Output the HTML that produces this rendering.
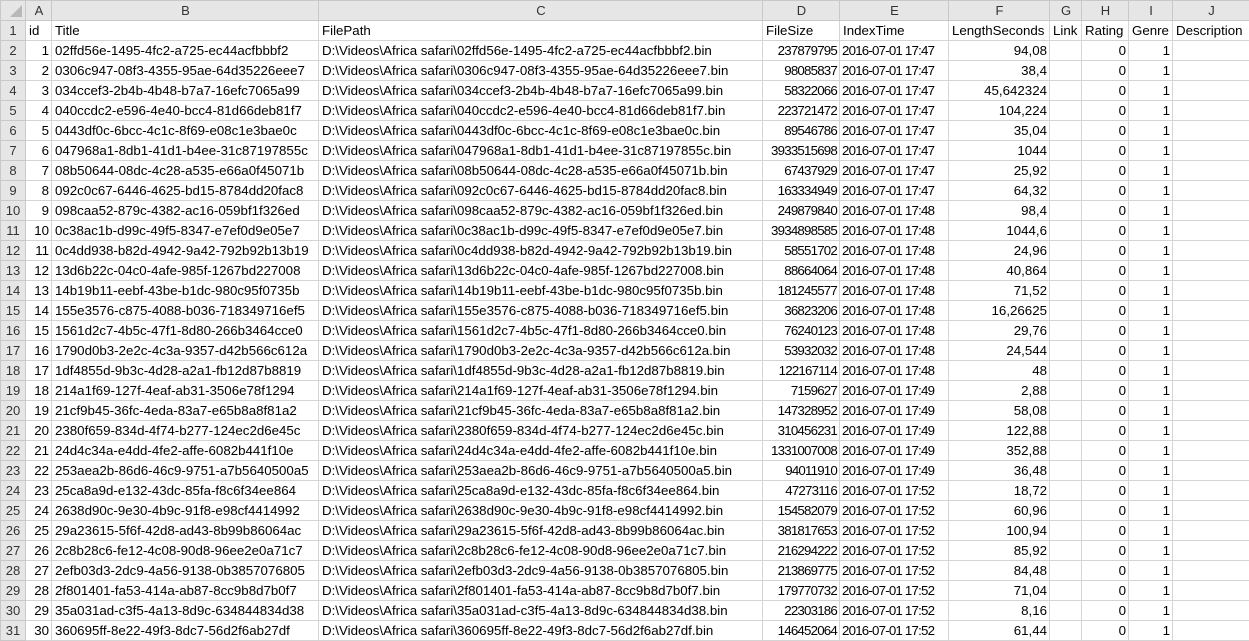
<!DOCTYPE html><html><head><meta charset="utf-8"><style>
body{margin:0;background:#fff;width:1249px;height:640px;overflow:hidden}
table{border-collapse:collapse;table-layout:fixed;width:1249px;font-family:"Liberation Sans",Arial,sans-serif;font-size:13.3px;color:#000}
td{height:19px;border:1px solid #d4d4d4;padding:0 2px 0 3px;white-space:nowrap;overflow:hidden;line-height:19px}
tr.h td{background:#e6e6e6;color:#333;text-align:center;border-color:#c8c8c8;font-size:13px}
td.r{background:#e6e6e6;color:#333;text-align:center;border-color:#c8c8c8;padding:0;font-size:13px}
td.n{text-align:right}
td:nth-child(5),td:nth-child(6){letter-spacing:-0.8px;padding:0 2px}
tr.h td:nth-child(5),tr.h td:nth-child(6),tr.t td:nth-child(5),tr.t td:nth-child(6){letter-spacing:0;padding:0 2px 0 3px}
tr.h td.c{position:relative}
</style></head><body>
<table>
<colgroup><col style="width:25px"><col style="width:26px"><col style="width:267px"><col style="width:444px"><col style="width:77px"><col style="width:109px"><col style="width:101px"><col style="width:32px"><col style="width:47px"><col style="width:44px"><col style="width:77px"></colgroup>
<tr class="h"><td class="c"><svg width="12" height="12" style="position:absolute;right:3px;bottom:3px"><polygon points="12,0 12,12 0,12" fill="#b8b8b8"/></svg></td><td>A</td><td>B</td><td>C</td><td>D</td><td>E</td><td>F</td><td>G</td><td>H</td><td>I</td><td>J</td></tr>
<tr class="t"><td class="r">1</td><td>id</td><td>Title</td><td>FilePath</td><td>FileSize</td><td>IndexTime</td><td>LengthSeconds</td><td>Link</td><td>Rating</td><td>Genre</td><td>Description</td></tr>
<tr><td class="r">2</td><td class="n">1</td><td>02ffd56e-1495-4fc2-a725-ec44acfbbbf2</td><td>D:\Videos\Africa safari\02ffd56e-1495-4fc2-a725-ec44acfbbbf2.bin</td><td class="n">237879795</td><td>2016-07-01 17:47</td><td class="n">94,08</td><td></td><td class="n">0</td><td class="n">1</td><td></td></tr>
<tr><td class="r">3</td><td class="n">2</td><td>0306c947-08f3-4355-95ae-64d35226eee7</td><td>D:\Videos\Africa safari\0306c947-08f3-4355-95ae-64d35226eee7.bin</td><td class="n">98085837</td><td>2016-07-01 17:47</td><td class="n">38,4</td><td></td><td class="n">0</td><td class="n">1</td><td></td></tr>
<tr><td class="r">4</td><td class="n">3</td><td>034ccef3-2b4b-4b48-b7a7-16efc7065a99</td><td>D:\Videos\Africa safari\034ccef3-2b4b-4b48-b7a7-16efc7065a99.bin</td><td class="n">58322066</td><td>2016-07-01 17:47</td><td class="n">45,642324</td><td></td><td class="n">0</td><td class="n">1</td><td></td></tr>
<tr><td class="r">5</td><td class="n">4</td><td>040ccdc2-e596-4e40-bcc4-81d66deb81f7</td><td>D:\Videos\Africa safari\040ccdc2-e596-4e40-bcc4-81d66deb81f7.bin</td><td class="n">223721472</td><td>2016-07-01 17:47</td><td class="n">104,224</td><td></td><td class="n">0</td><td class="n">1</td><td></td></tr>
<tr><td class="r">6</td><td class="n">5</td><td>0443df0c-6bcc-4c1c-8f69-e08c1e3bae0c</td><td>D:\Videos\Africa safari\0443df0c-6bcc-4c1c-8f69-e08c1e3bae0c.bin</td><td class="n">89546786</td><td>2016-07-01 17:47</td><td class="n">35,04</td><td></td><td class="n">0</td><td class="n">1</td><td></td></tr>
<tr><td class="r">7</td><td class="n">6</td><td>047968a1-8db1-41d1-b4ee-31c87197855c</td><td>D:\Videos\Africa safari\047968a1-8db1-41d1-b4ee-31c87197855c.bin</td><td class="n">3933515698</td><td>2016-07-01 17:47</td><td class="n">1044</td><td></td><td class="n">0</td><td class="n">1</td><td></td></tr>
<tr><td class="r">8</td><td class="n">7</td><td>08b50644-08dc-4c28-a535-e66a0f45071b</td><td>D:\Videos\Africa safari\08b50644-08dc-4c28-a535-e66a0f45071b.bin</td><td class="n">67437929</td><td>2016-07-01 17:47</td><td class="n">25,92</td><td></td><td class="n">0</td><td class="n">1</td><td></td></tr>
<tr><td class="r">9</td><td class="n">8</td><td>092c0c67-6446-4625-bd15-8784dd20fac8</td><td>D:\Videos\Africa safari\092c0c67-6446-4625-bd15-8784dd20fac8.bin</td><td class="n">163334949</td><td>2016-07-01 17:47</td><td class="n">64,32</td><td></td><td class="n">0</td><td class="n">1</td><td></td></tr>
<tr><td class="r">10</td><td class="n">9</td><td>098caa52-879c-4382-ac16-059bf1f326ed</td><td>D:\Videos\Africa safari\098caa52-879c-4382-ac16-059bf1f326ed.bin</td><td class="n">249879840</td><td>2016-07-01 17:48</td><td class="n">98,4</td><td></td><td class="n">0</td><td class="n">1</td><td></td></tr>
<tr><td class="r">11</td><td class="n">10</td><td>0c38ac1b-d99c-49f5-8347-e7ef0d9e05e7</td><td>D:\Videos\Africa safari\0c38ac1b-d99c-49f5-8347-e7ef0d9e05e7.bin</td><td class="n">3934898585</td><td>2016-07-01 17:48</td><td class="n">1044,6</td><td></td><td class="n">0</td><td class="n">1</td><td></td></tr>
<tr><td class="r">12</td><td class="n">11</td><td>0c4dd938-b82d-4942-9a42-792b92b13b19</td><td>D:\Videos\Africa safari\0c4dd938-b82d-4942-9a42-792b92b13b19.bin</td><td class="n">58551702</td><td>2016-07-01 17:48</td><td class="n">24,96</td><td></td><td class="n">0</td><td class="n">1</td><td></td></tr>
<tr><td class="r">13</td><td class="n">12</td><td>13d6b22c-04c0-4afe-985f-1267bd227008</td><td>D:\Videos\Africa safari\13d6b22c-04c0-4afe-985f-1267bd227008.bin</td><td class="n">88664064</td><td>2016-07-01 17:48</td><td class="n">40,864</td><td></td><td class="n">0</td><td class="n">1</td><td></td></tr>
<tr><td class="r">14</td><td class="n">13</td><td>14b19b11-eebf-43be-b1dc-980c95f0735b</td><td>D:\Videos\Africa safari\14b19b11-eebf-43be-b1dc-980c95f0735b.bin</td><td class="n">181245577</td><td>2016-07-01 17:48</td><td class="n">71,52</td><td></td><td class="n">0</td><td class="n">1</td><td></td></tr>
<tr><td class="r">15</td><td class="n">14</td><td>155e3576-c875-4088-b036-718349716ef5</td><td>D:\Videos\Africa safari\155e3576-c875-4088-b036-718349716ef5.bin</td><td class="n">36823206</td><td>2016-07-01 17:48</td><td class="n">16,26625</td><td></td><td class="n">0</td><td class="n">1</td><td></td></tr>
<tr><td class="r">16</td><td class="n">15</td><td>1561d2c7-4b5c-47f1-8d80-266b3464cce0</td><td>D:\Videos\Africa safari\1561d2c7-4b5c-47f1-8d80-266b3464cce0.bin</td><td class="n">76240123</td><td>2016-07-01 17:48</td><td class="n">29,76</td><td></td><td class="n">0</td><td class="n">1</td><td></td></tr>
<tr><td class="r">17</td><td class="n">16</td><td>1790d0b3-2e2c-4c3a-9357-d42b566c612a</td><td>D:\Videos\Africa safari\1790d0b3-2e2c-4c3a-9357-d42b566c612a.bin</td><td class="n">53932032</td><td>2016-07-01 17:48</td><td class="n">24,544</td><td></td><td class="n">0</td><td class="n">1</td><td></td></tr>
<tr><td class="r">18</td><td class="n">17</td><td>1df4855d-9b3c-4d28-a2a1-fb12d87b8819</td><td>D:\Videos\Africa safari\1df4855d-9b3c-4d28-a2a1-fb12d87b8819.bin</td><td class="n">122167114</td><td>2016-07-01 17:48</td><td class="n">48</td><td></td><td class="n">0</td><td class="n">1</td><td></td></tr>
<tr><td class="r">19</td><td class="n">18</td><td>214a1f69-127f-4eaf-ab31-3506e78f1294</td><td>D:\Videos\Africa safari\214a1f69-127f-4eaf-ab31-3506e78f1294.bin</td><td class="n">7159627</td><td>2016-07-01 17:49</td><td class="n">2,88</td><td></td><td class="n">0</td><td class="n">1</td><td></td></tr>
<tr><td class="r">20</td><td class="n">19</td><td>21cf9b45-36fc-4eda-83a7-e65b8a8f81a2</td><td>D:\Videos\Africa safari\21cf9b45-36fc-4eda-83a7-e65b8a8f81a2.bin</td><td class="n">147328952</td><td>2016-07-01 17:49</td><td class="n">58,08</td><td></td><td class="n">0</td><td class="n">1</td><td></td></tr>
<tr><td class="r">21</td><td class="n">20</td><td>2380f659-834d-4f74-b277-124ec2d6e45c</td><td>D:\Videos\Africa safari\2380f659-834d-4f74-b277-124ec2d6e45c.bin</td><td class="n">310456231</td><td>2016-07-01 17:49</td><td class="n">122,88</td><td></td><td class="n">0</td><td class="n">1</td><td></td></tr>
<tr><td class="r">22</td><td class="n">21</td><td>24d4c34a-e4dd-4fe2-affe-6082b441f10e</td><td>D:\Videos\Africa safari\24d4c34a-e4dd-4fe2-affe-6082b441f10e.bin</td><td class="n">1331007008</td><td>2016-07-01 17:49</td><td class="n">352,88</td><td></td><td class="n">0</td><td class="n">1</td><td></td></tr>
<tr><td class="r">23</td><td class="n">22</td><td>253aea2b-86d6-46c9-9751-a7b5640500a5</td><td>D:\Videos\Africa safari\253aea2b-86d6-46c9-9751-a7b5640500a5.bin</td><td class="n">94011910</td><td>2016-07-01 17:49</td><td class="n">36,48</td><td></td><td class="n">0</td><td class="n">1</td><td></td></tr>
<tr><td class="r">24</td><td class="n">23</td><td>25ca8a9d-e132-43dc-85fa-f8c6f34ee864</td><td>D:\Videos\Africa safari\25ca8a9d-e132-43dc-85fa-f8c6f34ee864.bin</td><td class="n">47273116</td><td>2016-07-01 17:52</td><td class="n">18,72</td><td></td><td class="n">0</td><td class="n">1</td><td></td></tr>
<tr><td class="r">25</td><td class="n">24</td><td>2638d90c-9e30-4b9c-91f8-e98cf4414992</td><td>D:\Videos\Africa safari\2638d90c-9e30-4b9c-91f8-e98cf4414992.bin</td><td class="n">154582079</td><td>2016-07-01 17:52</td><td class="n">60,96</td><td></td><td class="n">0</td><td class="n">1</td><td></td></tr>
<tr><td class="r">26</td><td class="n">25</td><td>29a23615-5f6f-42d8-ad43-8b99b86064ac</td><td>D:\Videos\Africa safari\29a23615-5f6f-42d8-ad43-8b99b86064ac.bin</td><td class="n">381817653</td><td>2016-07-01 17:52</td><td class="n">100,94</td><td></td><td class="n">0</td><td class="n">1</td><td></td></tr>
<tr><td class="r">27</td><td class="n">26</td><td>2c8b28c6-fe12-4c08-90d8-96ee2e0a71c7</td><td>D:\Videos\Africa safari\2c8b28c6-fe12-4c08-90d8-96ee2e0a71c7.bin</td><td class="n">216294222</td><td>2016-07-01 17:52</td><td class="n">85,92</td><td></td><td class="n">0</td><td class="n">1</td><td></td></tr>
<tr><td class="r">28</td><td class="n">27</td><td>2efb03d3-2dc9-4a56-9138-0b3857076805</td><td>D:\Videos\Africa safari\2efb03d3-2dc9-4a56-9138-0b3857076805.bin</td><td class="n">213869775</td><td>2016-07-01 17:52</td><td class="n">84,48</td><td></td><td class="n">0</td><td class="n">1</td><td></td></tr>
<tr><td class="r">29</td><td class="n">28</td><td>2f801401-fa53-414a-ab87-8cc9b8d7b0f7</td><td>D:\Videos\Africa safari\2f801401-fa53-414a-ab87-8cc9b8d7b0f7.bin</td><td class="n">179770732</td><td>2016-07-01 17:52</td><td class="n">71,04</td><td></td><td class="n">0</td><td class="n">1</td><td></td></tr>
<tr><td class="r">30</td><td class="n">29</td><td>35a031ad-c3f5-4a13-8d9c-634844834d38</td><td>D:\Videos\Africa safari\35a031ad-c3f5-4a13-8d9c-634844834d38.bin</td><td class="n">22303186</td><td>2016-07-01 17:52</td><td class="n">8,16</td><td></td><td class="n">0</td><td class="n">1</td><td></td></tr>
<tr><td class="r">31</td><td class="n">30</td><td>360695ff-8e22-49f3-8dc7-56d2f6ab27df</td><td>D:\Videos\Africa safari\360695ff-8e22-49f3-8dc7-56d2f6ab27df.bin</td><td class="n">146452064</td><td>2016-07-01 17:52</td><td class="n">61,44</td><td></td><td class="n">0</td><td class="n">1</td><td></td></tr>
</table></body></html>
